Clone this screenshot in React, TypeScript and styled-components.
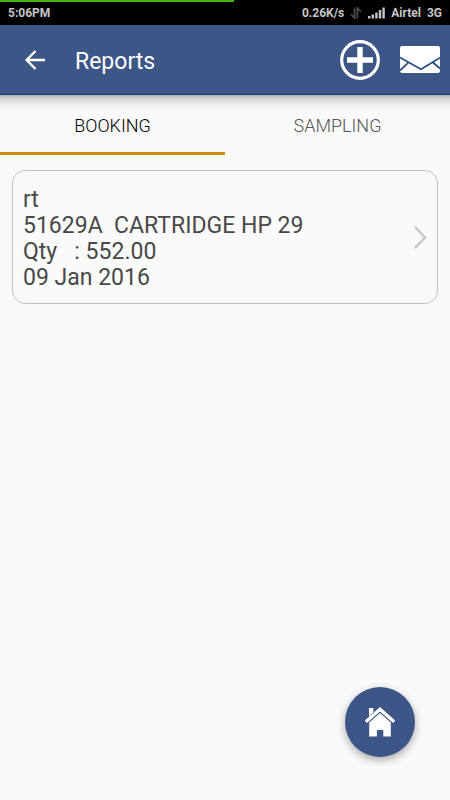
import React from 'react';
import styled, { createGlobalStyle } from 'styled-components';

const GlobalStyle = createGlobalStyle`
  * { box-sizing: border-box; }
  body {
    margin: 0;
    background: #fafafa;
    font-family: Roboto, "Noto Sans", sans-serif;
  }
  button { font-family: inherit; border: 0; padding: 0; background: none; cursor: pointer; }
  svg { display: block; }
`;

const Screen = styled.div`
  min-height: 100vh;
  display: flex;
  flex-direction: column;
`;

const StatusBar = styled.div`
  position: relative;
  height: 25px;
  padding: 0 8px;
  display: flex;
  align-items: center;
  justify-content: space-between;
  background: #000;
  color: #c6c6c6;
  font-size: 12px;
  font-weight: 700;
  line-height: 24px;
`;

const LoadBar = styled.div`
  position: absolute;
  top: 0;
  left: 0;
  width: 52%;
  height: 2px;
  background: #45b500;
`;

const StatusGroup = styled.div`
  display: flex;
  align-items: center;
  gap: 6px;
`;

const AppBar = styled.header`
  height: 70px;
  padding: 0 10px 0 20px;
  display: flex;
  align-items: center;
  background: #3b5687;
  border-bottom: 1px solid #0d4382;
`;

const Title = styled.h1`
  flex: 1;
  margin: 0 0 0 25px;
  padding-top: 4px;
  color: #fff;
  font-size: 23px;
  font-weight: 380;
  line-height: 28px;
`;

const Actions = styled.div`
  display: flex;
  align-items: center;
  gap: 20px;
`;

const Tabs = styled.div`
  display: grid;
  grid-template-columns: 1fr 1fr;
  background: linear-gradient(#b4b4b0, #d4d4d4 4px, #efefef 10px, #fafafa 16px);
`;

const Tab = styled.button<{ $active?: boolean }>`
  && {
    height: 60px;
    padding-top: 5px;
    border-bottom: 3px solid ${(p) => (p.$active ? '#c88c0a' : 'transparent')};
    color: ${(p) => (p.$active ? '#000' : '#555')};
    font-size: 18px;
    font-weight: 350;
    line-height: 24px;
  }
`;

const List = styled.main`
  padding: 15px 12px;
`;

const Card = styled.button`
  && {
    width: 100%;
    padding: 15px 10px 13px;
    display: flex;
    align-items: center;
    justify-content: space-between;
    border: 1px solid #c3c3c3;
    border-radius: 13px;
    text-align: left;
  }
`;

const Details = styled.span`
  display: flex;
  flex-direction: column;
  padding-top: 1px;
  margin-bottom: -1px;
  color: #484848;
  font-size: 23px;
  font-weight: 370;
  line-height: 26px;
`;

const Line = styled.span`
  white-space: pre;
`;

const HomeButton = styled.button`
  && {
    position: fixed;
    right: 35px;
    bottom: 43px;
    width: 70px;
    height: 70px;
    display: grid;
    place-items: center;
    border-radius: 50%;
    background: #3b5687;
    box-shadow: 0 3px 8px rgba(0, 0, 0, 0.35);
  }
`;

const TransferIcon = () => (
  <svg width="12" height="12" viewBox="0 0 12 12" fill="none" stroke="#4a4a4a" strokeWidth="1.8" aria-hidden="true">
    <path d="M4.6 0.5v10.5L1 7.4M7.4 11.5V1L11 4.6" />
  </svg>
);

const SignalIcon = () => (
  <svg width="17" height="12" viewBox="0 0 17 12" fill="#c6c6c6" aria-hidden="true">
    <path d="M0 9h2.4v2.4H0zM3.6 7.6H6v3.8H3.6zM7.2 5.6h2.4v5.8H7.2zM10.8 3h2.4v8.4h-2.4zM14.4.6h2.4v10.8h-2.4z" />
  </svg>
);

const BackIcon = () => (
  <svg width="30" height="30" viewBox="0 0 30 30" fill="none" stroke="#fff" strokeWidth="2.4" aria-hidden="true">
    <path d="M25 15H7M15.5 6L6.6 15l8.9 9" />
  </svg>
);

const AddIcon = () => (
  <svg width="40" height="42" viewBox="0 0 40 42" fill="none" stroke="#fff" aria-hidden="true">
    <circle cx="20" cy="21" r="18.3" strokeWidth="3.2" />
    <path d="M20 8v26M7 21h26" strokeWidth="5.4" />
  </svg>
);

const MailIcon = () => (
  <svg width="40" height="27" viewBox="0 0 40 27" aria-hidden="true">
    <rect width="40" height="27" rx="2" fill="#fff" />
    <path
      d="M0 11.5L21 23.3 40 11.8M8 16.8L0 24.5M33 16.5L40 22.5"
      fill="none"
      stroke="#2d4f87"
      strokeWidth="1.8"
    />
  </svg>
);

const ChevronIcon = () => (
  <svg width="14" height="24" viewBox="0 0 14 24" fill="none" stroke="#c6c6c6" strokeWidth="2.4" strokeLinecap="round" aria-hidden="true">
    <path d="M2.5 1.5L12 11.5 2.5 21.5" />
  </svg>
);

const HomeIcon = () => (
  <svg width="32" height="30" viewBox="0 0 32 30" fill="#fff" aria-hidden="true">
    <path d="M5 1h4.4v4.3L5 9.5z" />
    <path d="M16 0l15.2 13.4-2.2 2.6L16 4.6 3 16 .8 13.4z" />
    <path d="M16 6l10.8 9.5V29.4h-7.5V23h-6.4v6.4H5.2V15.5z" />
  </svg>
);

export default function App() {
  return (
    <Screen>
      <GlobalStyle />
      <StatusBar>
        <LoadBar />
        <span>5:06PM</span>
        <StatusGroup>
          <span>0.26K/s</span>
          <TransferIcon />
          <SignalIcon />
          <span>Airtel</span>
          <span>3G</span>
        </StatusGroup>
      </StatusBar>
      <AppBar>
        <button type="button" aria-label="Back"><BackIcon /></button>
        <Title>Reports</Title>
        <Actions>
          <button type="button" aria-label="Add"><AddIcon /></button>
          <button type="button" aria-label="Mail"><MailIcon /></button>
        </Actions>
      </AppBar>
      <Tabs role="tablist">
        <Tab type="button" role="tab" aria-selected="true" $active>BOOKING</Tab>
        <Tab type="button" role="tab" aria-selected="false">SAMPLING</Tab>
      </Tabs>
      <List>
        <Card type="button">
          <Details>
            <Line>rt</Line>
            <Line>51629A  CARTRIDGE HP 29</Line>
            <Line>Qty   : 552.00</Line>
            <Line>09 Jan 2016</Line>
          </Details>
          <ChevronIcon />
        </Card>
      </List>
      <HomeButton type="button" aria-label="Home"><HomeIcon /></HomeButton>
    </Screen>
  );
}
